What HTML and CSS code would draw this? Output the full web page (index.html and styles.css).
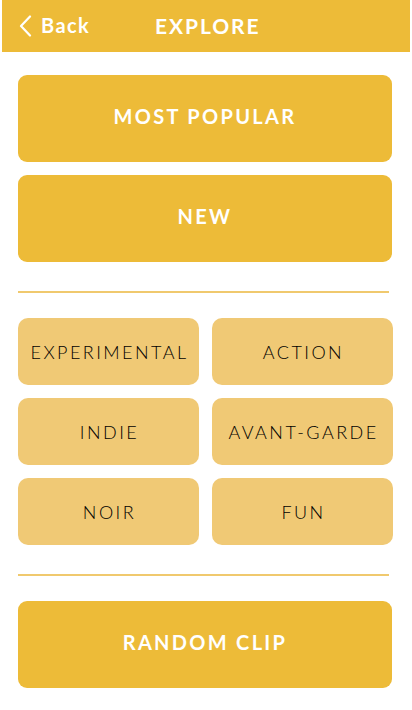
FILE: index.html
```html
<!DOCTYPE html>
<html>
<head>
<meta charset="utf-8">
<link rel="stylesheet" href="styles.css">
</head>
<body>
<header class="topbar">
  <a class="back">
    <svg class="chev" width="14" height="22" viewBox="0 0 14 22"><path d="M12 1.5 L3 11 L12 20.5" fill="none" stroke="#fff" stroke-width="2.2" stroke-linecap="round" stroke-linejoin="round"/></svg>
    <span>Back</span>
  </a>
  <h1 class="title">EXPLORE</h1>
</header>
<main class="content">
  <div class="big-group">
    <button class="big">MOST POPULAR</button>
    <button class="big">NEW</button>
  </div>
  <hr class="divider">
  <div class="genres">
    <button class="genre">EXPERIMENTAL</button>
    <button class="genre">ACTION</button>
    <button class="genre">INDIE</button>
    <button class="genre">AVANT-GARDE</button>
    <button class="genre">NOIR</button>
    <button class="genre">FUN</button>
  </div>
  <hr class="divider">
  <button class="big random">RANDOM CLIP</button>
</main>
</body>
</html>
```
FILE: styles.css
```css
* { box-sizing: border-box; }
html, body { margin: 0; padding: 0; background: #fff; }
body { font-family: Lato, "Open Sans", sans-serif; width: 412px; }

.topbar {
  margin: 0 2px;
  height: 52px;
  background: #edbb38;
  display: flex;
  align-items: center;
  position: relative;
}
.back {
  display: flex;
  align-items: center;
  gap: 9px;
  color: #fff;
  font-weight: 700;
  font-size: 20px;
  letter-spacing: 1.4px;
  padding-left: 16px;
  margin-top: -3px;
}
.chev { display: block; margin-top: 3px; }
.title {
  margin: -1px 0 0 65px;
  color: #fff;
  font-size: 21px;
  font-weight: 700;
  letter-spacing: 1.9px;
}

.content {
  padding: 23px 20px 0 18px;
  display: flex;
  flex-direction: column;
}
.big-group { display: flex; flex-direction: column; gap: 13px; }
.big {
  width: 374px;
  height: 87px;
  border: none;
  border-radius: 9px;
  background: #edbb38;
  color: #fff;
  font-family: Lato, sans-serif;
  font-weight: 700;
  font-size: 20px;
  letter-spacing: 2.3px;
  padding: 0 0 5px 0;
}
.divider {
  width: 371px;
  margin: 29px 0 25px 0;
  border: none;
  height: 2px;
  background: #f0c96e;
}
.genres {
  display: grid;
  grid-template-columns: 181px 181px;
  column-gap: 13px;
  row-gap: 13px;
}
.genre {
  height: 67px;
  border: none;
  border-radius: 10px;
  background: #f0c975;
  color: #000;
  font-family: Lato, sans-serif;
  font-weight: 300;
  font-size: 18px;
  letter-spacing: 2.45px;
  padding: 0 0 0 2px;
}
```
